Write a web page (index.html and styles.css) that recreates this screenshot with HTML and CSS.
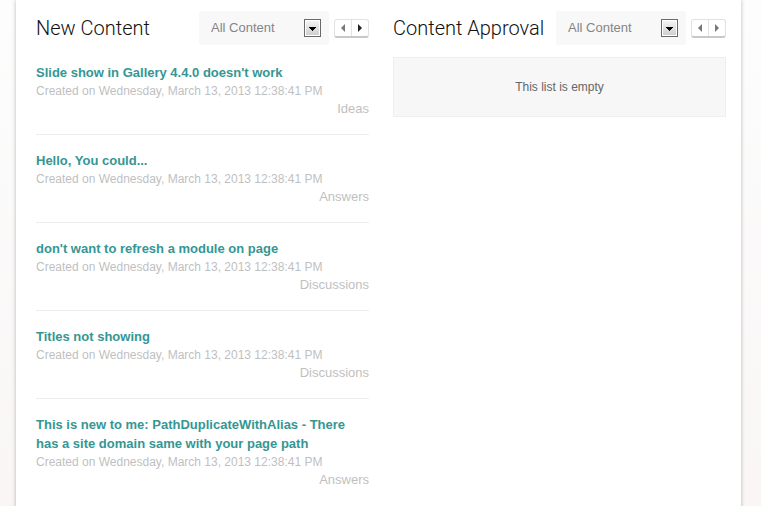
FILE: index.html
```html
<!DOCTYPE html>
<html lang="en">
<head>
<meta charset="utf-8">
<title>Content overview</title>
<link rel="stylesheet" href="styles.css">
</head>
<body>
<main class="page">
  <section class="panel">
    <header class="panel-head">
      <h2>New Content</h2>
      <div class="filter">
        <select aria-label="New content type"><option>All Content</option></select>
        <svg class="drop" viewBox="0 0 17 18" aria-hidden="true"><use href="#drop-icon"/></svg>
      </div>
      <div class="pager">
        <button type="button" class="muted" aria-label="Previous page"><svg viewBox="0 0 4 8"><path d="M4 0v8L0 4z"/></svg></button>
        <button type="button" aria-label="Next page"><svg viewBox="0 0 4 8"><path d="M0 0v8l4-4z"/></svg></button>
      </div>
    </header>
    <ul class="items">
      <li><a href="#">Slide show in Gallery 4.4.0 doesn't work</a><p>Created on Wednesday, March 13, 2013 12:38:41 PM</p><p class="category">Ideas</p></li>
      <li><a href="#">Hello, You could...</a><p>Created on Wednesday, March 13, 2013 12:38:41 PM</p><p class="category">Answers</p></li>
      <li><a href="#">don't want to refresh a module on page</a><p>Created on Wednesday, March 13, 2013 12:38:41 PM</p><p class="category">Discussions</p></li>
      <li><a href="#">Titles not showing</a><p>Created on Wednesday, March 13, 2013 12:38:41 PM</p><p class="category">Discussions</p></li>
      <li><a href="#">This is new to me: PathDuplicateWithAlias - There has a site domain same with your page path</a><p>Created on Wednesday, March 13, 2013 12:38:41 PM</p><p class="category">Answers</p></li>
    </ul>
  </section>
  <section class="panel">
    <header class="panel-head">
      <h2>Content Approval</h2>
      <div class="filter">
        <select aria-label="Approval content type"><option>All Content</option></select>
        <svg class="drop" viewBox="0 0 17 18" aria-hidden="true"><use href="#drop-icon"/></svg>
      </div>
      <div class="pager">
        <button type="button" class="muted" aria-label="Previous page"><svg viewBox="0 0 4 8"><path d="M4 0v8L0 4z"/></svg></button>
        <button type="button" class="muted" aria-label="Next page"><svg viewBox="0 0 4 8"><path d="M0 0v8l4-4z"/></svg></button>
      </div>
    </header>
    <p class="empty">This list is empty</p>
  </section>
</main>
<svg class="defs" aria-hidden="true">
  <defs>
    <linearGradient id="drop-fill" x1="0" y1="0" x2="0" y2="1"><stop offset="0" stop-color="#f4f4f4"/><stop offset="1" stop-color="#cfcfcf"/></linearGradient>
    <symbol id="drop-icon" viewBox="0 0 17 18">
      <rect x=".5" y=".5" width="16" height="17" fill="#fff" stroke="#6a6a6e"/>
      <rect x="2" y="2" width="13" height="14" fill="url(#drop-fill)"/>
      <path d="M5 8h7v1h-1v1h-1v1H9v1H8v-1H7v-1H6V9H5z"/>
    </symbol>
  </defs>
</svg>
</body>
</html>
```
FILE: styles.css
```css
* { box-sizing: border-box; }
html { min-height: 100%; background: linear-gradient(#fdfdfd, #f9f6f5); }
body {
  margin: 0;
  overflow: hidden;
  font: 13px/18px "Liberation Sans", Arial, sans-serif;
  color: #bfbfbf;
}
h2, p, ul { margin: 0; padding: 0; }
.page {
  display: grid;
  grid-template-columns: 1fr 1fr;
  gap: 24px;
  min-height: 100vh;
  margin: 0 20px 0 16px;
  padding: 11px 15px 16px 20px;
  background: #fff;
  box-shadow: 0 0 4px rgba(0, 0, 0, .28);
}
.panel { min-width: 0; }
.panel-head { display: flex; align-items: center; gap: 5px; height: 34px; }
h2 {
  flex: 1;
  min-width: 0;
  font: 300 20px/24px Roboto, "Open Sans", sans-serif;
  color: #111;
  white-space: nowrap;
}
.filter { position: relative; width: 130px; }
.filter select {
  appearance: none;
  display: block;
  width: 100%;
  height: 34px;
  padding: 0 32px 0 12px;
  border: 0;
  border-radius: 2px;
  background: #f8f8f8;
  color: #858585;
  font: inherit;
}
.drop {
  position: absolute;
  top: 8px;
  right: 8px;
  width: 17px;
  height: 18px;
  pointer-events: none;
}
.pager {
  display: flex;
  width: 35px;
  height: 19px;
  border: 1px solid #e2e2e2;
  border-bottom: 2px solid #c8c8c8;
  border-radius: 3px;
  background: #fff;
}
.pager button {
  display: flex;
  flex: 1;
  align-items: center;
  justify-content: center;
  padding: 0;
  border: 0;
  background: none;
  color: #222;
}
.pager button + button { border-left: 1px solid #e2e2e2; }
.pager .muted { color: #777; }
.pager svg { width: 4px; height: 8px; fill: currentColor; }
.items { padding-top: 2px; list-style: none; }
.items li { padding: 16px 0; border-bottom: 1px solid #ececec; }
.items li:last-child { border: 0; }
.items a {
  display: block;
  color: #359694;
  font-weight: bold;
  line-height: 19px;
  text-decoration: none;
}
.items p { font-size: 12px; }
.items .category { font-size: 13px; text-align: right; }
.empty {
  margin-top: 12px;
  padding: 20px;
  border: 1px solid #eee;
  background: #f7f7f7;
  color: #666;
  font-size: 12px;
  text-align: center;
}
.defs { position: absolute; width: 0; height: 0; }
```
